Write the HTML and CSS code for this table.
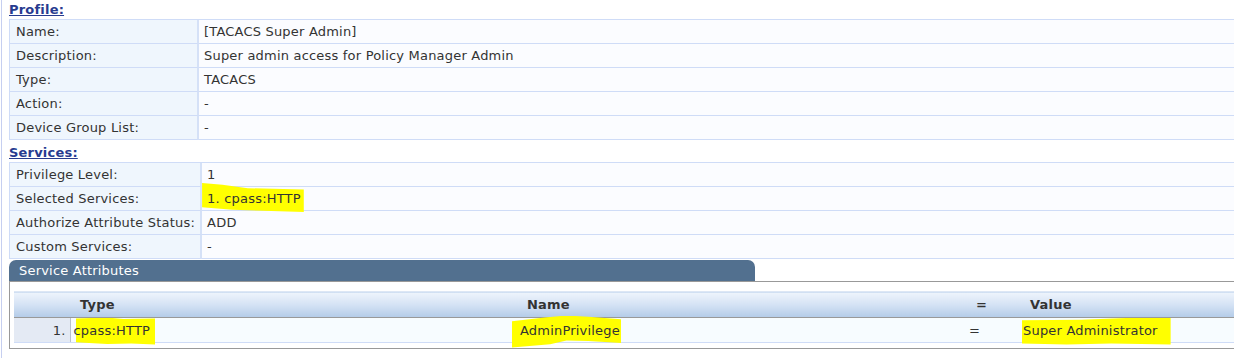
FILE: index.html
```html
<!DOCTYPE html>
<html>
	<head>
		<meta charset="utf-8" />
		<title>TACACS Super Admin</title>
		<link rel="stylesheet" href="styles.css">
	</head>
	<body>
		<div class="page">
			<h2 class="section">Profile:</h2>
			<table class="info">
				<tr><td class="label">Name:</td><td class="value">[TACACS Super Admin]</td></tr>
				<tr><td class="label">Description:</td><td class="value">Super admin access for Policy Manager Admin</td></tr>
				<tr><td class="label">Type:</td><td class="value">TACACS</td></tr>
				<tr><td class="label">Action:</td><td class="value">-</td></tr>
				<tr><td class="label">Device Group List:</td><td class="value">-</td></tr>
			</table>

			<h2 class="section">Services:</h2>
			<table class="info">
				<tr><td class="label">Privilege Level:</td><td class="value">1</td></tr>
				<tr><td class="label">Selected Services:</td><td class="value"><span class="hl hl-services">1. cpass:HTTP</span></td></tr>
				<tr><td class="label">Authorize Attribute Status:</td><td class="value">ADD</td></tr>
				<tr><td class="label">Custom Services:</td><td class="value">-</td></tr>
			</table>

			<div class="panel">
				<div class="panel-title">Service Attributes</div>
				<div class="panel-body">
					<table class="grid">
						<colgroup>
							<col class="c-idx">
							<col class="c-type">
							<col class="c-name">
							<col class="c-eq">
							<col>
						</colgroup>
						<thead>
							<tr><th></th><th>Type</th><th>Name</th><th>=</th><th>Value</th></tr>
						</thead>
						<tbody>
							<tr>
								<td class="idx">1.</td>
								<td><span class="hl hl-type">cpass:HTTP</span></td>
								<td><span class="hl hl-name">AdminPrivilege</span></td>
								<td>=</td>
								<td><span class="hl hl-value">Super Administrator</span></td>
							</tr>
						</tbody>
					</table>
				</div>
			</div>
		</div>
	</body>
</html>
```

FILE: styles.css
```css
body {
	margin: 0;
	overflow: hidden;
	font-family: "DejaVu Sans", Verdana, sans-serif;
	font-size: 13px;
	letter-spacing: 0.2px;
	color: #333;
	background: #fff;
}

.page {
	min-height: 358px;
	margin-left: 1px;
	padding-left: 7px;
	border-left: 1px solid #c6cff0;
}

/* section headings */
.section {
	margin: 3px 0 0 0;
	font-size: 13px;
	line-height: 19px;
	font-weight: bold;
	color: #273b8f;
	text-decoration: underline;
}

.section:first-child {
	margin-top: 0;
}

/* label / value tables */
.info {
	width: 100%;
	border-collapse: separate;
	border-spacing: 0;
	border-top: 1px solid #cfdcf7;
	border-left: 1px solid #cfdcf7;
}

.info td {
	height: 23px;
	padding: 0 5px;
	border-bottom: 1px solid #cfdcf7;
	vertical-align: middle;
	white-space: nowrap;
}

.info .label {
	width: 176px;
	padding-left: 6px;
	background: #eff6fd;
	border-right: 2px solid #d5e1f7;
}

.info .value {
	background: #fbfcff;
}

/* attributes panel */
.panel {
	margin-top: 1px;
}

.panel-title {
	width: 736px;
	height: 21px;
	line-height: 22px;
	padding-left: 10px;
	color: #fff;
	background: #52708f;
	border-radius: 7px 7px 0 0;
}

.panel-body {
	padding: 9px 0 5px 4px;
	border: 1px solid #999;
	border-right: none;
}

.grid {
	width: 100%;
	border-collapse: collapse;
	table-layout: fixed;
}

.c-idx { width: 56px; }
.c-type { width: 447px; }
.c-name { width: 449px; }
.c-eq { width: 54px; }

.grid th {
	height: 25px;
	padding: 0 0 0 10px;
	text-align: left;
	font-weight: bold;
	color: #333;
	background: linear-gradient(#eef4fc, #d4e2f4 50%, #b3cbe8);
	border-top: 1px solid #dde7f5;
	border-bottom: 1px solid #999;
}

.grid td {
	height: 24px;
	padding: 0 0 0 3px;
	background: #f7fcff;
	border-bottom: 1px solid #cfdcf7;
	white-space: nowrap;
}

.grid td.idx {
	padding: 0 4px 0 0;
	text-align: right;
	background: #e4eaf4;
	border-right: 1px solid #b9c0cc;
}

/* highlighter marks */
.hl {
	position: relative;
	z-index: 0;
}

.hl::before {
	content: "";
	position: absolute;
	z-index: -1;
	background: #ffff00;
}

.hl-services::before {
	left: -5px;
	right: -3px;
	top: -8px;
	bottom: -6px;
	clip-path: polygon(0 0, 20% 6%, 45% 18%, 70% 20%, 100% 22%, 100% 100%, 60% 96%, 30% 92%, 0 84%);
}

.hl-type::before {
	left: 2px;
	right: -5px;
	top: -5px;
	bottom: -7px;
	clip-path: polygon(0 4%, 40% 0, 60% 6%, 100% 4%, 100% 100%, 70% 96%, 40% 98%, 0 92%);
}

.hl-name::before {
	left: -8px;
	right: -1px;
	top: -7px;
	bottom: -10px;
	clip-path: polygon(0 18%, 30% 6%, 50% 0, 70% 4%, 100% 12%, 100% 86%, 70% 80%, 50% 78%, 35% 90%, 0 100%);
}

.hl-value::before {
	left: -1px;
	right: -13px;
	top: -5px;
	bottom: -7px;
	clip-path: polygon(0 10%, 40% 8%, 70% 2%, 100% 0, 100% 100%, 60% 96%, 30% 100%, 0 96%);
}
```
